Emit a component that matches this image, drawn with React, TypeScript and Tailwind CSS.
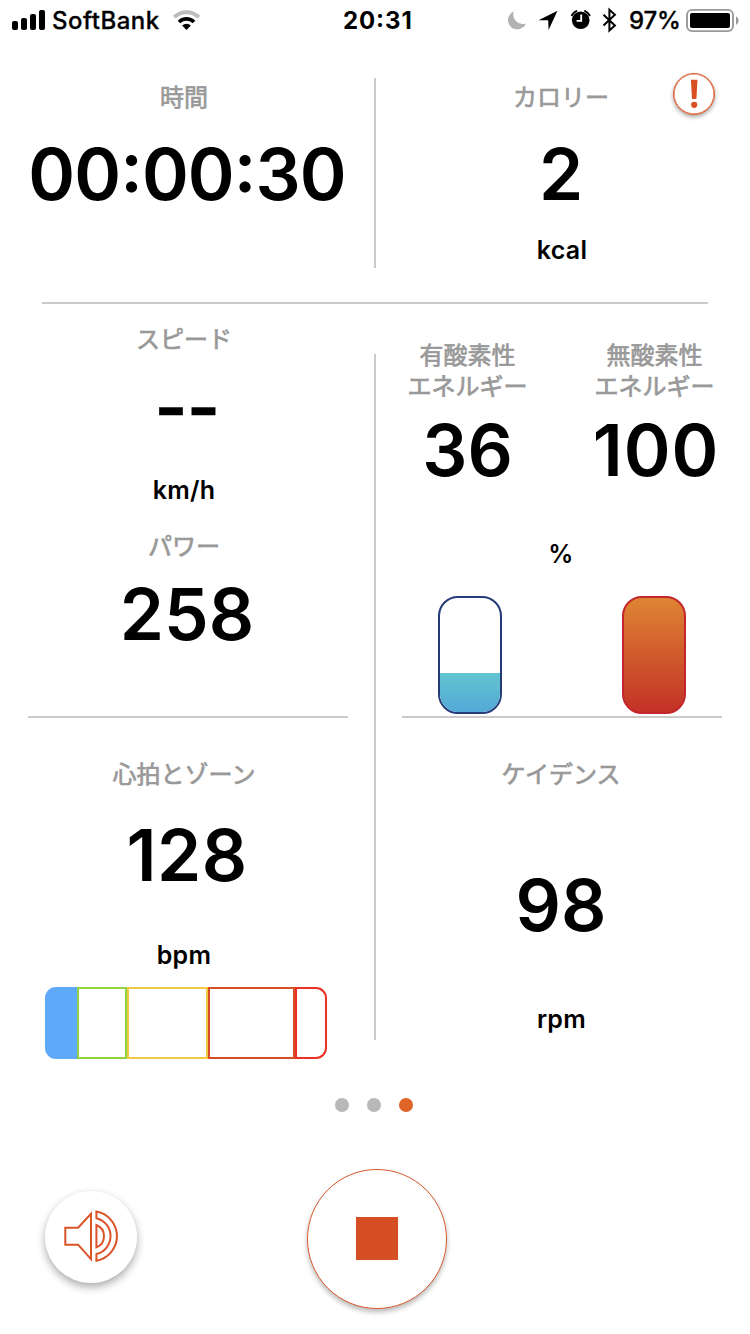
import type { ReactNode } from "react";

const Label = ({ className = "pb-[2px] leading-[22px]", children }: { className?: string; children: ReactNode }) => (
  <div className={`font-['Noto_Sans_CJK_JP',sans-serif] text-[24px] font-normal text-center text-[#999999] whitespace-nowrap [-webkit-text-stroke:0.7px_#999999] ${className}`}>
    {children}
  </div>
);

const Value = ({ className = "", children }: { className?: string; children: ReactNode }) => (
  <div className={`pb-[2px] text-[71px] leading-[68px] font-semibold whitespace-nowrap ${className}`}>{children}</div>
);

const Unit = ({ className = "", children }: { className?: string; children: ReactNode }) => (
  <div className={`text-[25px] leading-[26px] font-semibold tracking-[0.3px] whitespace-nowrap ${className}`}>{children}</div>
);

function StatusBar() {
  return (
    <header className="flex h-[40px] items-center text-[24px] leading-[40px] font-medium">
      <div className="flex w-[343px] items-center pl-[12px]">
        <svg width="34" height="40" viewBox="0 0 34 40">
          <rect x="0" y="21" width="6" height="9" rx="2" />
          <rect x="9" y="18" width="6" height="12" rx="2" />
          <rect x="18" y="14" width="6" height="16" rx="2" />
          <rect x="27" y="10" width="6" height="20" rx="2" />
        </svg>
        <span className="ml-[6px] w-[108px] pt-[2px] tracking-[0.5px] [-webkit-text-stroke:0.3px_black]">SoftBank</span>
        <svg className="ml-[12px]" width="30" height="40" viewBox="0 0 30 40" fill="none">
          <path d="M2.2 17.2a17.5 17.5 0 0 1 24.6 0" stroke="#bdbdbd" strokeWidth="4" />
          <path d="M7 22a10.8 10.8 0 0 1 15 0" stroke="#000" strokeWidth="3.8" />
          <path d="M14.5 30l-4.4-4.4a6.4 6.4 0 0 1 8.8 0z" fill="#000" />
        </svg>
      </div>
      <div className="w-[69px] pt-[2px] text-center font-bold tracking-[0.9px] [font-feature-settings:'case']">20:31</div>
      <div className="flex grow items-center">
        <svg className="ml-[96px]" width="18" height="40" viewBox="0 0 18 40">
          <path d="M5.8 11.6A9.2 9.2 0 1 0 17.8 23.4A9.3 9.3 0 0 1 5.8 11.6z" fill="#b2b2b2" />
        </svg>
        <svg className="ml-[12px]" width="20" height="40" viewBox="0 0 20 40">
          <path d="M19.5 10.7L0.5 20.3h9.7l.4 9.7z" />
        </svg>
        <svg className="ml-[13px]" width="20" height="40" viewBox="0 0 20 40">
          <circle cx="9.7" cy="20.3" r="8.8" />
          <path d="M.9 15.2a10.5 10.5 0 0 1 4.4-4.1M18.5 15.2a10.5 10.5 0 0 0-4.4-4.1" stroke="#000" strokeWidth="2" fill="none" strokeLinecap="round" />
          <path d="M10.2 14.6v6.3H5.6" stroke="#fff" strokeWidth="1.9" fill="none" />
        </svg>
        <svg className="ml-[11px]" width="16" height="40" viewBox="0 0 16 40" fill="none">
          <path d="M1.5 14.8l11.4 10.6-5.5 5V9.8l5.5 5L1.5 25.6" stroke="#000" strokeWidth="2" />
        </svg>
        <span className="ml-[11px] w-[52px] pt-[2px] tracking-[-0.2px] [-webkit-text-stroke:0.3px_black]">97%</span>
        <svg className="ml-[5px]" width="54" height="40" viewBox="0 0 54 40">
          <rect x="1" y="9.9" width="46" height="21.2" rx="5" fill="none" stroke="#999" strokeWidth="1.9" />
          <rect x="4" y="13" width="40" height="15" rx="2" />
          <path d="M50 16.2a5 5 0 0 1 0 8.8z" fill="#999" />
        </svg>
      </div>
    </header>
  );
}

function AlertButton() {
  return (
    <button className="absolute top-[73px] left-[673px] flex size-[42px] items-center justify-center rounded-full border-[1px] border-[#dd6439] bg-white shadow-[inset_0_0_0_0.6px_#dd6439,0_2px_4px_rgba(0,0,0,0.35)]">
      <svg width="10" height="30" viewBox="0 0 10 30" fill="#d84f22">
        <path d="M1.9 .8h6.6L7.4 20H3z" />
        <circle cx="5.2" cy="25.8" r="3.1" />
      </svg>
    </button>
  );
}

function HeartZones() {
  return (
    <div className="mt-[19px] ml-[45px] flex h-[72px] w-[282px] self-start">
      <div className="w-[32px] rounded-l-[11px] bg-[#5fa9f9]" />
      <div className="w-[50px] border-2 border-[#91d240]" />
      <div className="w-[81px] border-2 border-[#f0c844]" />
      <div className="w-[87px] border-2 border-[#d54f24]" />
      <div className="w-[32px] rounded-r-[11px] border-2 border-[#ec3025]" />
    </div>
  );
}

export default function App() {
  return (
    <div className="relative flex h-[1334px] w-[750px] flex-col overflow-hidden bg-white font-['Inter',sans-serif] text-black">
      <StatusBar />
      <AlertButton />

      <section className="flex h-[262px]">
        <div className="flex w-[374px] flex-col items-center pt-[45px] [&>*:first-child]:mr-[6px]">
          <Label>時間</Label>
          <Value className="mt-[31px] tracking-[-0.9px] [font-feature-settings:'case']">00:00:30</Value>
        </div>
        <div className="mt-[38px] h-[190px] w-[2px] bg-[#cacaca]" />
        <div className="flex w-[370px] flex-col items-center pt-[45px]">
          <Label>カロリー</Label>
          <Value className="mt-[31px]">2</Value>
          <Unit className="mt-[27px] ml-[2px]">kcal</Unit>
        </div>
      </section>
      <div className="mx-[42px] h-[2px] shrink-0 bg-[#cacaca]" />

      <section className="flex h-[756px]">
        <div className="flex w-[374px] flex-col items-center pt-[23px]">
          <Label className="mr-[6px] pb-[2px] leading-[22px]">スピード</Label>
          <Value className="mt-[22px] tracking-[-0.5px] [-webkit-text-stroke:0.6px_black]">--</Value>
          <Unit className="mt-[34px] mr-[6px]">km/h</Unit>
          <Label className="mt-[31px] mr-[6px] pb-[2px] leading-[22px]">パワー</Label>
          <Value className="mt-[22px]">258</Value>
          <div className="mt-[66px] ml-[2px] h-[2px] w-[320px] bg-[#cacaca]" />
          <Label className="mt-[44px] mr-[6px] pb-[2px] leading-[22px]">心拍とゾーン</Label>
          <Value className="mt-[35px] tracking-[0.5px]">128</Value>
          <Unit className="mt-[51px] mr-[6px]">bpm</Unit>
          <HeartZones />
        </div>
        <div className="mt-[50px] h-[686px] w-[2px] bg-[#cacaca]" />
        <div className="flex w-[370px] flex-col items-center pt-[34px]">
          <div className="flex">
            <div className="flex w-[187px] flex-col items-center">
              <Label className="leading-[31px]">有酸素性<br />エネルギー</Label>
              <Value className="mt-[16px]">36</Value>
            </div>
            <div className="flex w-[187px] flex-col items-center">
              <Label className="leading-[31px]">無酸素性<br />エネルギー</Label>
              <Value className="mt-[16px] ml-[3px] tracking-[1px]">100</Value>
            </div>
          </div>
          <Unit className="mt-[55px]">%</Unit>
          <div className="mt-[29px] ml-[2px] flex gap-[120px]">
            <div className="flex h-[118px] w-[64px] flex-col justify-end overflow-hidden rounded-[20px] border-2 border-[#253c78]">
              <div className="h-[39px] bg-linear-to-b from-[#63c5d0] to-[#53a8d6]" />
            </div>
            <div className="h-[118px] w-[64px] rounded-[20px] border-2 border-[#c4272b] bg-linear-to-b from-[#de8534] via-[#d05a2b] to-[#c33027]" />
          </div>
          <div className="mt-[2px] ml-[2px] h-[2px] w-[320px] bg-[#cacaca]" />
          <Label className="mt-[44px] pb-[2px] leading-[22px]">ケイデンス</Label>
          <Value className="mt-[85px]">98</Value>
          <Unit className="mt-[65px] ml-[1px]">rpm</Unit>
        </div>
      </section>

      <div className="mt-[38px] ml-[335px] flex gap-[18px]">
        <span className="size-[14px] rounded-full bg-[#b8b8b8]" />
        <span className="size-[14px] rounded-full bg-[#b8b8b8]" />
        <span className="size-[14px] rounded-full bg-[#e06328]" />
      </div>

      <footer className="mt-[57px] flex items-start">
        <button className="mt-[22px] ml-[45px] size-[92px] rounded-full bg-white shadow-[0_4px_8px_rgba(0,0,0,0.33)]">
          <svg width="92" height="92" viewBox="0 0 92 92" fill="none" stroke="#db5327" strokeWidth="2">
            <path d="M20.3 36.7h12.8L46 22.8v45.4L33.1 53.7H20.3z" />
            <path d="M51.4 20.5a25 25 0 0 1 0 49.2v-6.7a18.4 18.4 0 0 0 0-35.8z" />
            <path d="M51.4 34a12 12 0 0 1 0 22.3z" />
          </svg>
        </button>
        <button className="ml-[170px] flex size-[140px] items-center justify-center rounded-full border-[1.5px] border-[#d95a2e] bg-white pb-[1px] shadow-[0_3px_5px_rgba(0,0,0,0.28)]">
          <span className="h-[43px] w-[42px] bg-[#d54e24]" />
        </button>
      </footer>
    </div>
  );
}
